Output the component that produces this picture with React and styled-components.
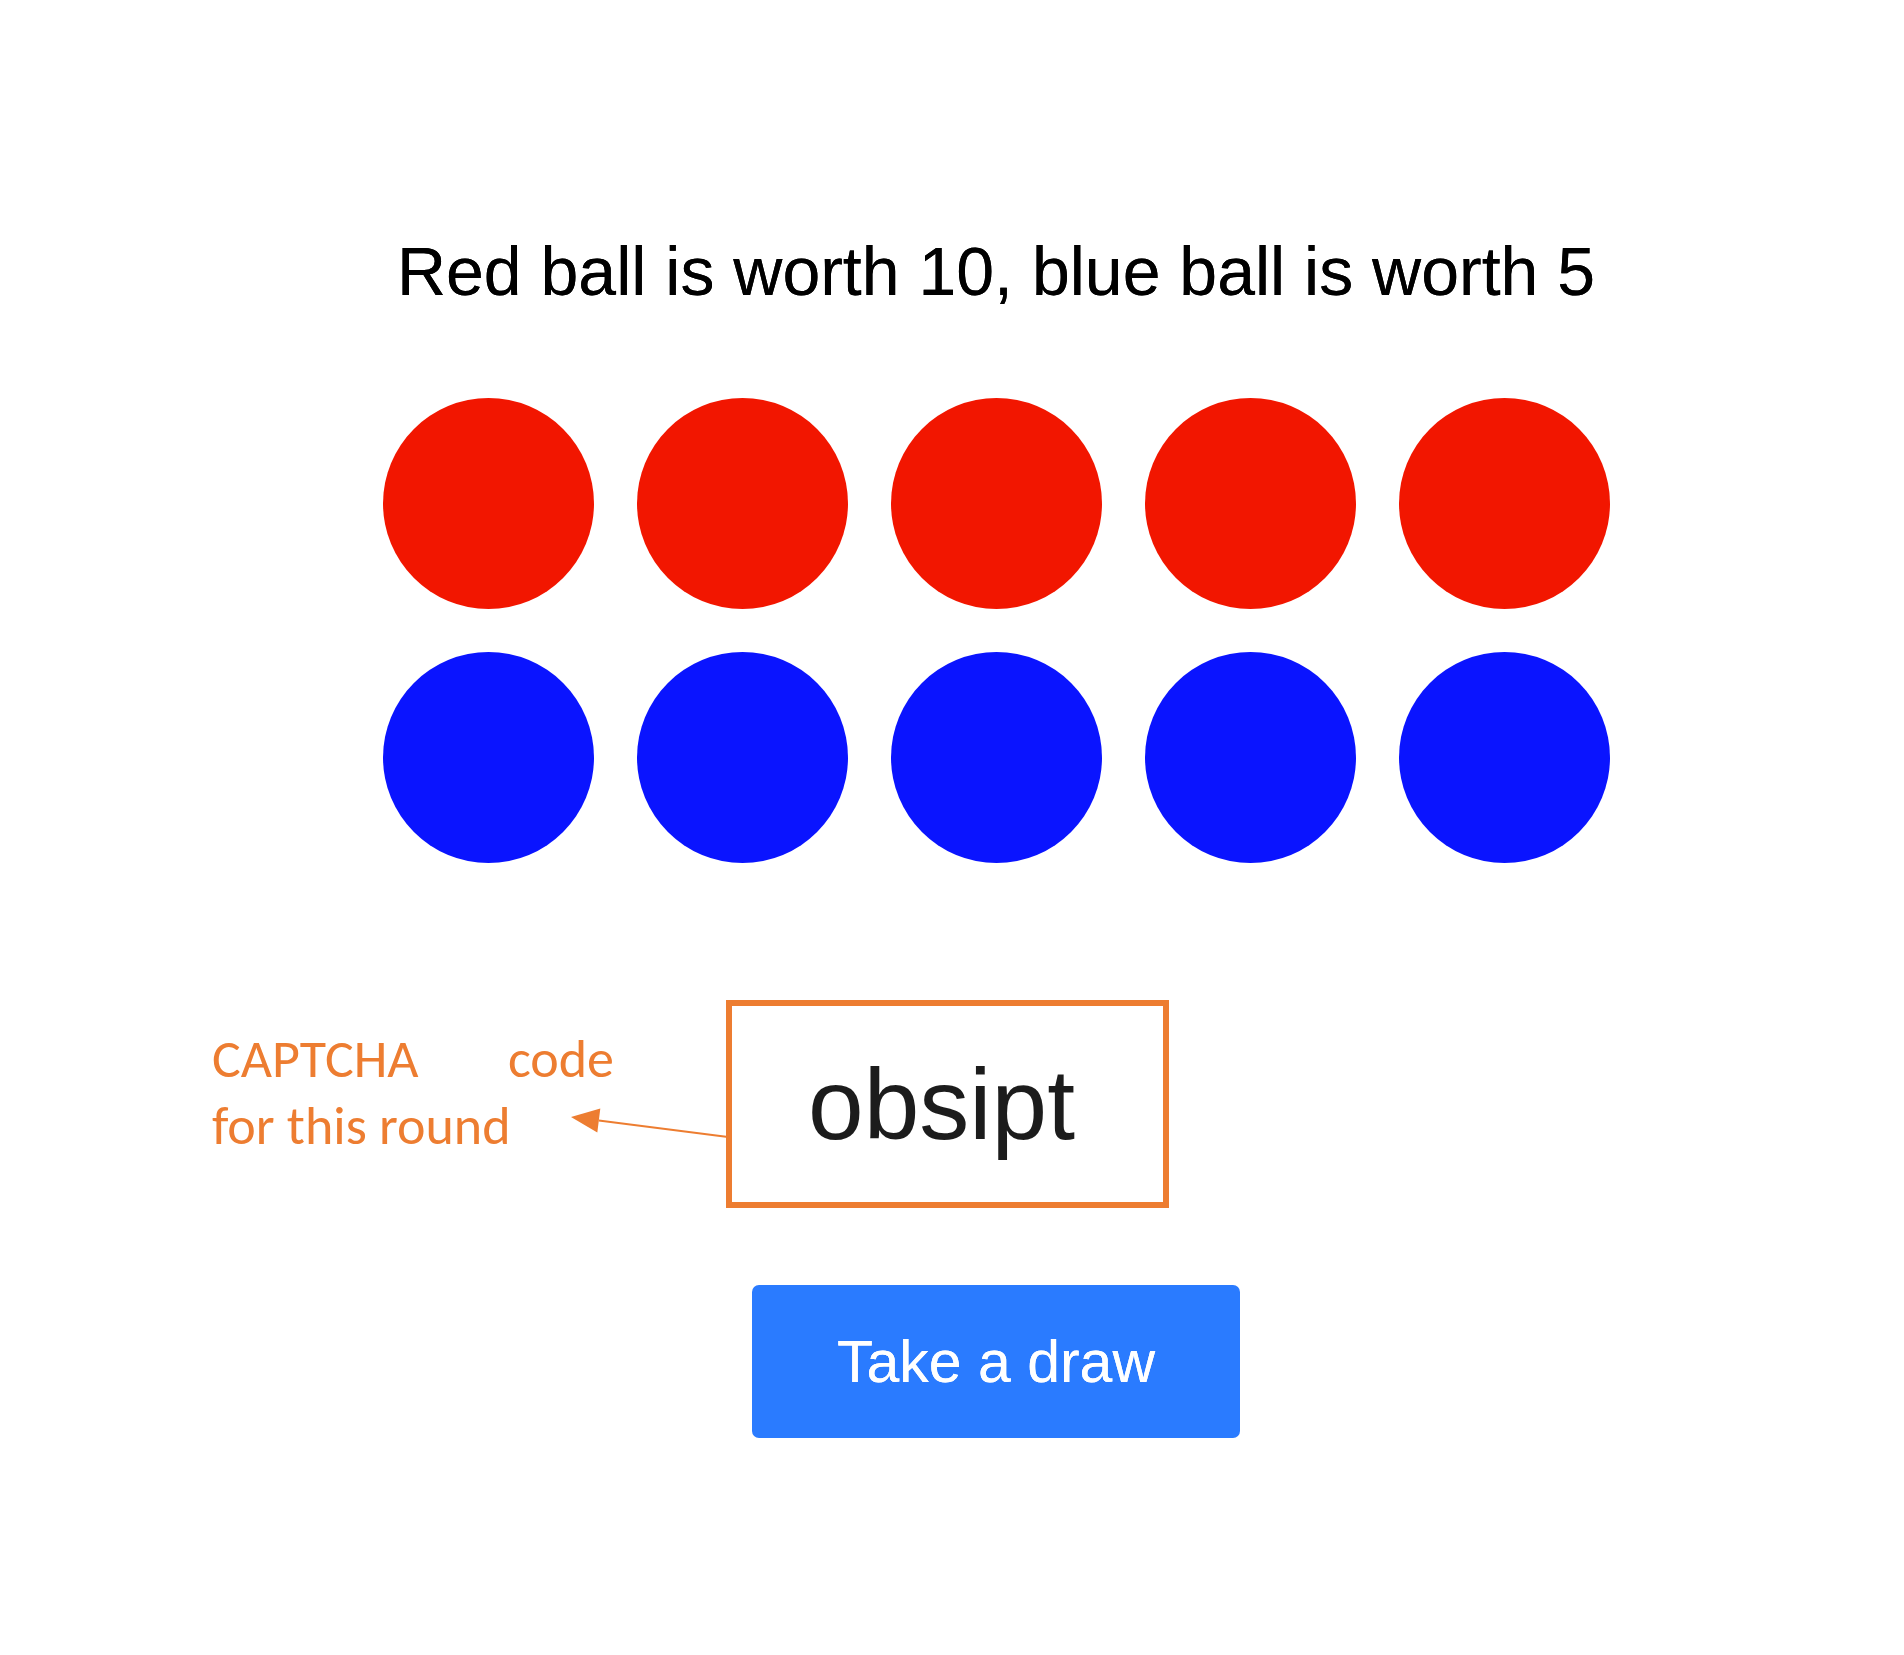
import React from "react";
import styled, { createGlobalStyle } from "styled-components";

const colors = {
  red: "#f21600",
  blue: "#0a14ff",
  orange: "#ed7d31",
  button: "#2a7bff",
};

const GlobalStyle = createGlobalStyle`
  html, body {
    margin: 0;
    padding: 0;
    background: #ffffff;
  }
  body {
    font-family: "Liberation Sans", Arial, sans-serif;
  }
`;

const balls = [
  ...Array(5).fill("red"),
  ...Array(5).fill("blue"),
];

const App = () => {
  return (
    <>
      <GlobalStyle />
      <Page>
        <Title>Red ball is worth 10, blue ball is worth 5</Title>
        <BallGrid>
          {balls.map((color, i) => (
            <Ball key={i} color={colors[color]} />
          ))}
        </BallGrid>
        <CaptchaRow>
          <Note>
            <NoteLine>CAPTCHA code</NoteLine>
            <span>for this round</span>
          </Note>
          <CodeBox>
            <Code>obsipt</Code>
          </CodeBox>
          <Arrow width="180" height="50" viewBox="0 0 180 50">
            <line
              x1="38.8"
              y1="20.5"
              x2="168"
              y2="37"
              stroke={colors.orange}
              strokeWidth="2"
            />
            <polygon
              points="11,17 40.3,8.6 37.3,32.4"
              fill={colors.orange}
            />
          </Arrow>
        </CaptchaRow>
        <DrawButton>Take a draw</DrawButton>
      </Page>
    </>
  );
};

const Page = styled.div`
  display: flex;
  flex-direction: column;
  align-items: center;
  width: 1904px;
  min-height: 1655px;
  box-sizing: border-box;
  padding: 237px 0 0 88px;
`;

const Title = styled.h1`
  margin: 0;
  font-family: "Liberation Sans", Arial, sans-serif;
  font-weight: normal;
  font-size: 68px;
  line-height: 1;
  color: #000;
  white-space: nowrap;
  text-shadow: 0 0 0.6px #000;
`;

const BallGrid = styled.div`
  display: grid;
  grid-template-columns: repeat(5, 211px);
  grid-auto-rows: 211px;
  column-gap: 43px;
  row-gap: 43px;
  margin-top: 93px;
`;

const Ball = styled.div`
  border-radius: 50%;
  background-color: ${(props) => props.color};
`;

const CaptchaRow = styled.div`
  position: relative;
  align-self: stretch;
  display: flex;
  align-items: flex-start;
  margin-top: 137px;
  padding-left: 124px;
`;

const Note = styled.div`
  width: 402px;
  margin-top: 26px;
  margin-right: 112px;
  font-family: Carlito, Calibri, Lato, sans-serif;
  font-size: 54px;
  line-height: 67px;
  color: ${colors.orange};
`;

const NoteLine = styled.div`
  text-align: justify;
  text-align-last: justify;
`;

const CodeBox = styled.div`
  display: flex;
  align-items: center;
  justify-content: center;
  width: 443px;
  height: 208px;
  box-sizing: border-box;
  border: 6px solid ${colors.orange};
  background: #fff;
`;

const Code = styled.span`
  font-family: "Liberation Sans", Arial, sans-serif;
  font-size: 100px;
  line-height: 1;
  color: #1c1c1c;
  filter: blur(0.7px);
  margin-left: -12px;
`;

const Arrow = styled.svg`
  position: absolute;
  left: 472px;
  top: 100px;
  overflow: visible;
`;

const DrawButton = styled.button`
  margin-top: 77px;
  width: 488px;
  height: 153px;
  border: none;
  border-radius: 7px;
  background-color: ${colors.button};
  color: #fff;
  font-family: "Liberation Sans", Arial, sans-serif;
  font-size: 59px;
  text-shadow: 0 0 0.6px #fff;
  cursor: pointer;
`;

export default App;
